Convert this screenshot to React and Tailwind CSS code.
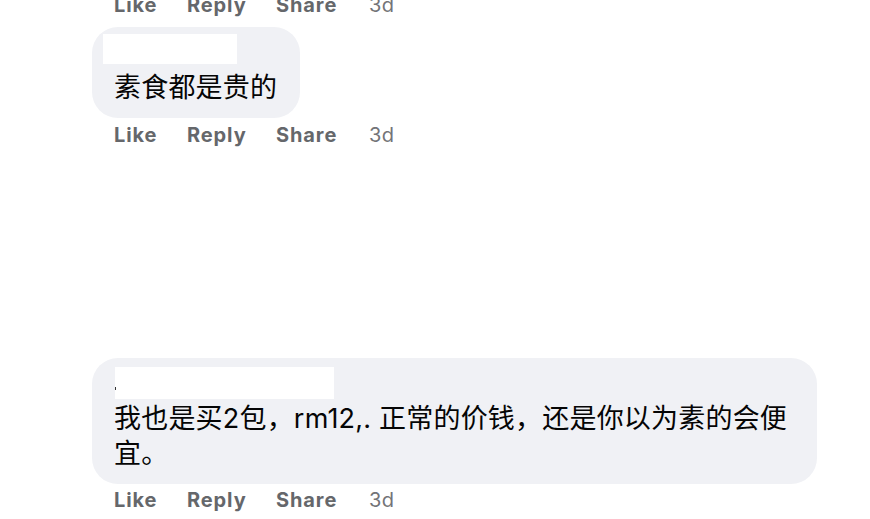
import React from "react";

const latin = "font-['Inter','Noto_Sans_CJK_SC',sans-serif]";

function Actions({ className = "" }) {
  return (
    <div className={`flex h-[26px] items-center pl-[22px] text-[20px] leading-[26px] text-[#65676b] ${latin} ${className}`}>
      <span className="w-[73px] font-bold tracking-[0.9px]">Like</span>
      <span className="w-[89px] font-bold tracking-[0.9px]">Reply</span>
      <span className="w-[93px] font-bold tracking-[0.9px]">Share</span>
      <span className="font-normal tracking-[0.5px] text-[#737478]">3d</span>
    </div>
  );
}

export default function App() {
  return (
    <div className="h-[519px] w-[870px] overflow-hidden bg-white">
      <div className="-mt-[8px] pl-[92px]">
        <Actions />

        {/* first comment */}
        <div className="mt-[9px] w-fit rounded-[26px] bg-[#f0f1f5] pb-[13px] pl-[22px] pr-[23px] pt-[7px]">
          <div className="-ml-[11px] h-[30px] w-[134px] bg-white" />
          <p className={`mt-[6px] h-[35px] whitespace-nowrap text-[27px] leading-[35px] tracking-[0.2px] text-[#050505] ${latin}`}>
            素食都是贵的
          </p>
        </div>
        <Actions className="mt-[4px]" />

        {/* second comment */}
        <div className="mt-[210px] w-[725px] rounded-[26px] bg-[#f0f1f5] pb-[13px] pl-[22px] pr-[22px] pt-[9px]">
          <div className="relative ml-[1px] h-[32px] w-[219px] bg-white">
            <span className="absolute left-0 top-[20px] h-[3px] w-[1px] bg-[#333]" />
          </div>
          <p className={`mt-[2px] whitespace-nowrap text-[27px] leading-[35px] tracking-[0.2px] text-[#050505] ${latin}`}>
            我也是买2包，rm12,. 正常的价钱，还是你以为素的会便
            <br />
            宜。
          </p>
        </div>
        <Actions className="mt-[3px]" />
      </div>
    </div>
  );
}
